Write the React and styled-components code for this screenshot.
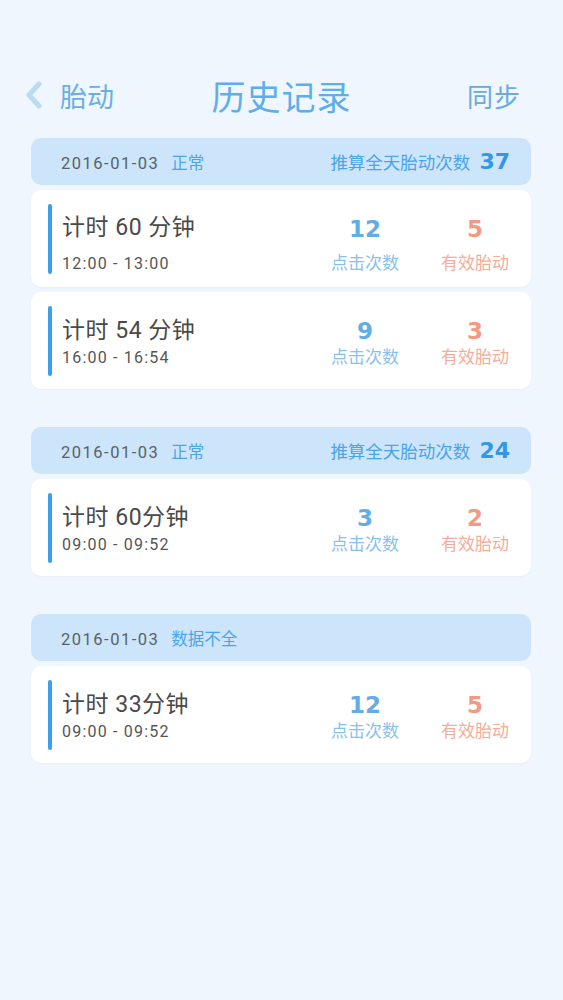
import { createGlobalStyle, styled } from "styled-components";

const GlobalStyle = createGlobalStyle`
  body {
    margin: 0;
    background-color: #eff6fe;
    font-family: Roboto, "Noto Sans CJK SC", sans-serif;
  }
`;

const Page = styled.div`
  min-height: 1000px;
  padding-top: 70px;
  box-sizing: border-box;
  background-color: #eff6fe;
`;

const Nav = styled.header`
  display: grid;
  grid-template-columns: 1fr auto 1fr;
  align-items: center;
  height: 50px;
`;

const Back = styled.div`
  display: flex;
  align-items: center;
  gap: 18px;
  padding-left: 25px;
  color: #6aaee6;
  font-size: 27px;
`;

const Title = styled.h1`
  margin: 0;
  font-size: 34px;
  font-weight: 400;
  color: #5eaeea;
  letter-spacing: 1px;
`;

const Sync = styled.div`
  justify-self: end;
  padding-right: 42px;
  font-size: 26px;
  color: #6aaadf;
  letter-spacing: 1px;
`;

const List = styled.main`
  display: flex;
  flex-direction: column;
  gap: 38px;
  margin: 18px 32px 0 31px;
`;

const Group = styled.section`
  display: flex;
  flex-direction: column;
  gap: 5px;
`;

const GroupHeader = styled.div`
  display: flex;
  align-items: center;
  justify-content: space-between;
  height: 47px;
  padding: 0 21px 0 30px;
  border-radius: 10px;
  background-color: #cde5fa;
`;

const DateText = styled.span`
  font-size: 16.5px;
  letter-spacing: 1.5px;
  color: #596068;
`;

const Status = styled.span`
  margin-left: 12px;
  font-size: 16.5px;
  color: #4aa4e8;
`;

const Estimate = styled.div`
  display: flex;
  align-items: center;
  gap: 9px;
  font-size: 17.5px;
  color: #4aa4e8;
`;

const EstimateValue = styled.span`
  font-family: "DejaVu Sans", sans-serif;
  font-weight: 700;
  font-size: 22px;
  color: #3597e4;
`;

const Card = styled.div`
  display: flex;
  align-items: center;
  height: 97px;
  padding: 0 16px 0 17px;
  border-radius: 10px;
  background-color: #ffffff;
  box-shadow: 0 1px 2px rgba(160, 190, 220, 0.12);
`;

const Bar = styled.div`
  width: 4px;
  height: 70px;
  border-radius: 2px;
  background-color: #3aa0ee;
`;

const Body = styled.div`
  display: flex;
  align-items: center;
  flex: 1;
  margin-left: 10px;
  padding-top: ${(p) => (p.$loose ? "12px" : "4px")};
`;

const Info = styled.div`
  display: flex;
  flex-direction: column;
  gap: ${(p) => (p.$loose ? "13px" : "4px")};
  flex: 1;
`;

const Duration = styled.div`
  font-size: 23px;
  line-height: 26px;
  letter-spacing: 0.5px;
  color: #4a4a4a;
`;

const Range = styled.div`
  font-size: 16px;
  line-height: 20px;
  letter-spacing: 1.2px;
  color: #555555;
`;

const Stats = styled.div`
  display: flex;
  gap: 30px;
`;

const Stat = styled.div`
  display: flex;
  flex-direction: column;
  align-items: center;
  gap: ${(p) => (p.$loose ? "11px" : "3px")};
  width: 80px;
`;

const StatValue = styled.span`
  font-family: "DejaVu Sans", sans-serif;
  font-weight: 700;
  font-size: 23px;
  line-height: 26px;
  color: ${(p) => (p.$warm ? "#f39a84" : "#62ade8")};
`;

const StatLabel = styled.span`
  font-size: 17px;
  line-height: 20px;
  color: ${(p) => (p.$warm ? "#f4ad9c" : "#88c1ed")};
`;

const groups = [
  {
    date: "2016-01-03",
    status: "正常",
    total: 37,
    records: [
      { title: "计时 60 分钟", range: "12:00 - 13:00", taps: 12, valid: 5, loose: true },
      { title: "计时 54 分钟", range: "16:00 - 16:54", taps: 9, valid: 3 },
    ],
  },
  {
    date: "2016-01-03",
    status: "正常",
    total: 24,
    records: [{ title: "计时 60分钟", range: "09:00 - 09:52", taps: 3, valid: 2 }],
  },
  {
    date: "2016-01-03",
    status: "数据不全",
    records: [{ title: "计时 33分钟", range: "09:00 - 09:52", taps: 12, valid: 5 }],
  },
];

function Chevron() {
  return (
    <svg width="17" height="28" viewBox="0 0 17 28">
      <polyline
        points="14,3 4,14 14,25"
        fill="none"
        stroke="#bddaf3"
        strokeWidth="5"
        strokeLinecap="round"
        strokeLinejoin="round"
      />
    </svg>
  );
}

function Record({ record }) {
  return (
    <Card>
      <Bar />
      <Body $loose={record.loose}>
        <Info $loose={record.loose}>
          <Duration>{record.title}</Duration>
          <Range>{record.range}</Range>
        </Info>
        <Stats>
          <Stat $loose={record.loose}>
            <StatValue>{record.taps}</StatValue>
            <StatLabel>点击次数</StatLabel>
          </Stat>
          <Stat $loose={record.loose}>
            <StatValue $warm>{record.valid}</StatValue>
            <StatLabel $warm>有效胎动</StatLabel>
          </Stat>
        </Stats>
      </Body>
    </Card>
  );
}

export default function App() {
  return (
    <Page>
      <GlobalStyle />
      <Nav>
        <Back>
          <Chevron />
          <span>胎动</span>
        </Back>
        <Title>历史记录</Title>
        <Sync>同步</Sync>
      </Nav>
      <List>
        {groups.map((group, i) => (
          <Group key={i}>
            <GroupHeader>
              <div>
                <DateText>{group.date}</DateText>
                <Status>{group.status}</Status>
              </div>
              {group.total != null && (
                <Estimate>
                  推算全天胎动次数
                  <EstimateValue>{group.total}</EstimateValue>
                </Estimate>
              )}
            </GroupHeader>
            {group.records.map((record, j) => (
              <Record key={j} record={record} />
            ))}
          </Group>
        ))}
      </List>
    </Page>
  );
}
